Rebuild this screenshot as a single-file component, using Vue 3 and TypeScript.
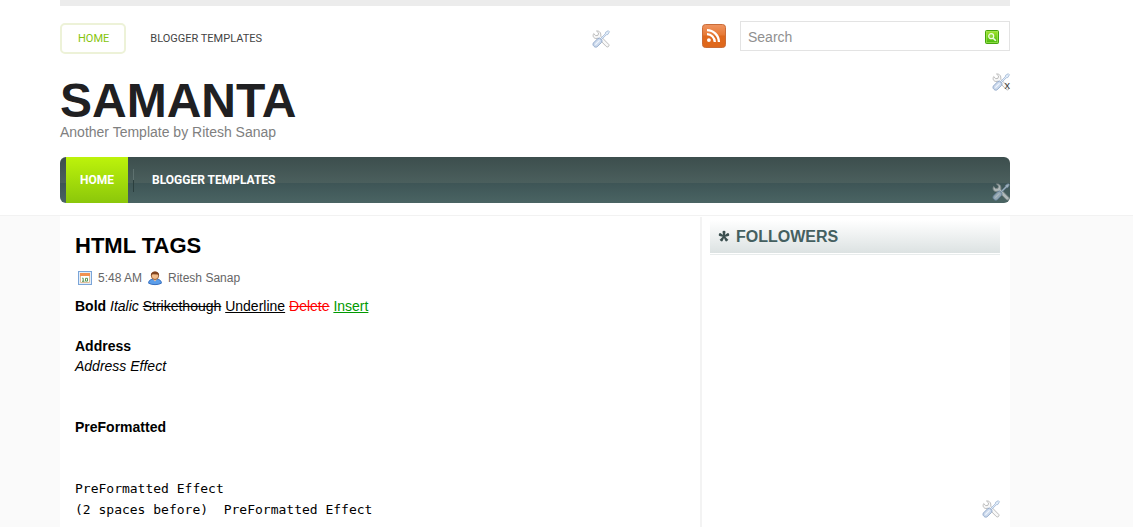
<script setup lang="ts">
import { defineComponent, h, ref } from 'vue'

const query = ref('')
const menu = ['Home', 'Blogger Templates']
const petals = [0, 65, -65, 145, -145]

const ToolsIcon = defineComponent({
  setup: () => () =>
    h('svg', { viewBox: '0 0 18 18', width: 18, height: 18, 'aria-hidden': 'true' }, [
      h('path', {
        d: 'M4.5 1 6.6 3 6 5.3 3.8 5.7 1.7 3.6C.3 6 1.6 8.4 4 8.5L6.1 8.2 14.3 16.5C15.5 17.8 17.8 16.2 16.8 14.5L8.7 6.2C9.4 3.2 7.5.5 4.5 1Z',
        fill: '#f7f7f7', stroke: '#a9a9a9', 'stroke-width': 0.9,
      }),
      h('path', {
        d: 'M8.4 8.7 13.3 3.8 13.6 2.3 16.3.7 17.4 1.8 15.8 4.5 14.3 4.8 9.4 9.7Z',
        fill: '#e0edfb', stroke: '#8ba6ca', 'stroke-width': 0.8,
      }),
      h('path', {
        d: 'M7.5 8 10.2 10.6 9.6 12.3 5.2 16.7C3.3 18.3-.2 15.4 1.4 13L5.9 8.5Z',
        fill: '#c4d4ea', stroke: '#7894bd', 'stroke-width': 0.9,
      }),
      h('path', { d: 'M3.3 14.6 7.6 10.3', stroke: '#eef4fd', 'stroke-width': 1.2, fill: 'none' }),
    ]),
})
</script>

<template>
  <div class="page">
    <header class="wrap header">
      <div class="top">
        <nav class="top-nav" aria-label="Pages">
          <a v-for="(item, i) in menu" :key="item" href="#" :class="{ current: i === 0 }">{{ item }}</a>
          <a href="#" class="tools nav-edit" aria-label="Edit page list"><ToolsIcon /></a>
        </nav>
        <a href="#" class="rss" aria-label="Subscribe">
          <svg viewBox="0 0 24 24" width="24" height="24" aria-hidden="true">
            <defs>
              <linearGradient id="rssFill" x1="0" y1="0" x2="0" y2="1">
                <stop offset="0" stop-color="#ef9461" />
                <stop offset=".45" stop-color="#e77a35" />
                <stop offset=".5" stop-color="#df681d" />
                <stop offset="1" stop-color="#df671a" />
              </linearGradient>
            </defs>
            <rect x=".5" y=".5" width="23" height="23" rx="3" fill="url(#rssFill)" stroke="#c96c38" />
            <circle cx="6.9" cy="16.1" r="1.9" fill="#fff" />
            <path d="M5 10.2a7.8 7.8 0 0 1 7.8 7.8M5 6.1a11.9 11.9 0 0 1 11.9 11.9" fill="none" stroke="#fff" stroke-width="2.3" />
          </svg>
        </a>
        <form class="search" role="search" @submit.prevent>
          <input v-model="query" type="text" placeholder="Search" aria-label="Search" />
          <button type="submit" aria-label="Search">
            <svg viewBox="0 0 14 14" width="14" height="14" aria-hidden="true">
              <defs>
                <linearGradient id="searchFill" x1="0" y1="0" x2="0" y2="1">
                  <stop offset="0" stop-color="#a6e52c" />
                  <stop offset="1" stop-color="#43b90c" />
                </linearGradient>
              </defs>
              <rect x=".5" y=".5" width="13" height="13" rx="1" fill="url(#searchFill)" stroke="#46a50c" />
              <rect x="1.5" y="1.5" width="11" height="11" fill="none" stroke="#a5e558" stroke-opacity=".7" />
              <circle cx="6.2" cy="6.2" r="2.5" fill="#8fd63c" stroke="#f1fbe5" stroke-width="1.2" />
              <path d="m8.2 8.2 2.6 2.6" stroke="#f1fbe5" stroke-width="1.6" />
            </svg>
          </button>
        </form>
      </div>

      <div class="brand">
        <h1>SAMANTA</h1>
        <p>Another Template by Ritesh Sanap</p>
        <a href="#" class="tools brand-edit" aria-label="Edit header"><ToolsIcon /><span>x</span></a>
      </div>

      <nav class="main-nav" aria-label="Main">
        <a v-for="(item, i) in menu" :key="item" href="#" :class="{ current: i === 0 }">{{ item }}</a>
        <a href="#" class="tools menu-edit" aria-label="Edit menu"><ToolsIcon /></a>
      </nav>
    </header>

    <div class="body">
      <div class="wrap columns">
        <main class="post">
          <h2>HTML TAGS</h2>
          <div class="meta">
            <svg viewBox="0 0 14 14" width="14" height="14" aria-hidden="true">
              <rect x=".5" y=".5" width="13" height="13" fill="#e3edf9" stroke="#7ba5d8" />
              <rect x="2" y="2" width="10" height="10" fill="#fff" />
              <rect x="2" y="2" width="10" height="3" fill="#f29150" />
              <path d="M2.5 5v6.5h9V5" fill="none" stroke="#dfbd99" />
              <path d="M4.2 7.2h1v3M4 10.3h2.4M7.5 7.3h2v2.8h-2z" fill="none" stroke="#589454" />
            </svg>
            <span>5:48 AM</span>
            <svg viewBox="0 0 14 14" width="14" height="14" aria-hidden="true">
              <path d="M.6 12.2C.6 9.3 2.8 8 7 8s6.4 1.3 6.4 4.2c-2.8 1.9-10 1.9-12.8 0Z" fill="#5b9eea" stroke="#2c65b8" stroke-width=".9" />
              <path d="M5 8.2 7 10.5l2-2.3" fill="#f3c299" />
              <circle cx="7" cy="4.8" r="3.7" fill="#f2bd8c" stroke="#8c4e26" stroke-width=".8" />
              <path d="M3 5C2.5 1.9 4.4.4 7 .4S11.5 1.9 11 5L9.8 3.4 4.4 3.2Z" fill="#81431e" />
            </svg>
            <span>Ritesh Sanap</span>
          </div>
          <p>
            <b>Bold</b> <i>Italic</i> <s>Strikethough</s> <u>Underline</u> <del>Delete</del> <ins>Insert</ins>
          </p>
          <h3>Address</h3>
          <address>Address Effect</address>
          <h3 class="pre-title">PreFormatted</h3>
          <pre>PreFormatted Effect
(2 spaces before)  PreFormatted Effect</pre>
        </main>
        <aside class="sidebar">
          <h2>
            <svg viewBox="0 0 12 12" width="12" height="12" aria-hidden="true">
              <path
                v-for="angle in petals"
                :key="angle"
                d="M5.3 5.4 4.5 1Q4.5-.2 6-.2T7.5 1L6.7 5.4Z"
                :transform="`rotate(${angle} 6 5.4)`"
                fill="#3c5050"
              />
            </svg>
            FOLLOWERS
          </h2>
          <a href="#" class="tools side-edit" aria-label="Edit followers"><ToolsIcon /></a>
        </aside>
      </div>
    </div>
  </div>
</template>

<style>
body {
  margin: 0;
  background: #fff;
}
</style>

<style scoped>
.page {
  display: flex;
  flex-direction: column;
  min-height: 100vh;
  font: 14px/20px "Liberation Sans", Arial, sans-serif;
  color: #000;
}
.page * {
  box-sizing: border-box;
}
h1, h2, h3, p, pre {
  margin: 0;
}
a {
  text-decoration: none;
}
svg {
  display: block;
  flex: none;
  overflow: visible;
}
.wrap {
  width: calc(100% - 60px);
  max-width: 950px;
  margin-left: 60px;
}
.tools {
  opacity: 0.85;
}
.header {
  border-top: 6px solid #ececec;
  padding-bottom: 12px;
}
.top {
  display: flex;
  align-items: flex-start;
  padding-top: 15px;
}
.top-nav {
  position: relative;
  display: flex;
  flex: 0 1 550px;
  gap: 8px;
  padding-top: 2px;
}
.top-nav > a:not(.tools) {
  padding: 0 14px;
  border: 2px solid transparent;
  border-radius: 5px;
  font: 11px/27px Roboto, sans-serif;
  text-transform: uppercase;
  color: #444;
}
.top-nav > a.current:not(.tools) {
  padding: 0 15px 0 16px;
  border-color: #edf2d8;
  color: #86c40d;
}
.nav-edit {
  position: absolute;
  right: 0;
  top: 9px;
}
.rss {
  margin: 3px 14px 0 auto;
}
.search {
  display: flex;
  align-items: center;
  width: 270px;
  height: 30px;
  padding: 2px 10px 0 7px;
  border: 1px solid #e3e3e3;
}
.search input {
  flex: 1;
  min-width: 0;
  padding: 0;
  border: 0;
  outline: 0;
  background: none;
  font: 14px/20px "Liberation Sans", Arial, sans-serif;
  color: #555;
}
.search input::placeholder {
  color: #909090;
  opacity: 1;
}
.search button {
  padding: 0;
  border: 0;
  background: none;
}
.brand {
  position: relative;
  padding: 26px 0 15px;
}
.brand h1 {
  font-size: 48px;
  line-height: 42px;
  color: #202022;
}
.brand p {
  color: #808080;
}
.brand-edit {
  position: absolute;
  right: 0;
  top: 19px;
}
.brand-edit span {
  position: absolute;
  right: 0;
  bottom: 0;
  font-size: 11px;
  line-height: 11px;
  color: #222;
}
.main-nav {
  position: relative;
  display: flex;
  align-items: center;
  gap: 6px;
  height: 46px;
  padding-left: 6px;
  border-radius: 6px;
  background: linear-gradient(#3c4e4d, #4b5f5d 56%, #3e5556 57%, #4a6463);
}
.main-nav > a:not(.tools) {
  padding: 0 18px;
  font: bold 12px/46px Roboto, sans-serif;
  text-transform: uppercase;
  color: #fff;
}
.main-nav > a.current:not(.tools) {
  padding: 0 14px;
  background: linear-gradient(#bdf30b, #8bc70a);
}
.main-nav > a.current::after {
  content: "";
  position: absolute;
  left: 73px;
  top: 12px;
  width: 1px;
  height: 23px;
  background: linear-gradient(#5e716f 48%, #2b3f3e 49%);
}
.menu-edit {
  position: absolute;
  right: 0;
  bottom: 2px;
  opacity: 0.6;
}
.body {
  display: flex;
  flex: 1;
  border-top: 1px solid #f2f2f2;
  background: #fafafa;
}
.columns {
  display: flex;
  border-top: 1px solid #fff;
  background: #fff;
}
.post {
  flex: 1;
  min-width: 0;
  padding: 14px 15px 0;
}
.post h2 {
  font-size: 22px;
  line-height: 30px;
}
.meta {
  display: flex;
  align-items: center;
  gap: 6px;
  height: 20px;
  margin: 7px 0 8px 3px;
  font-size: 12px;
  color: #666;
}
.post h3 {
  margin-top: 20px;
  font-size: 14px;
  line-height: 20px;
}
.post .pre-title {
  margin-top: 41px;
}
del {
  color: #f00;
}
ins {
  color: #090;
}
pre {
  margin-top: 41px;
  font: 13px/21px "DejaVu Sans Mono", monospace;
}
.sidebar {
  position: relative;
  flex: 0 0 310px;
  padding: 3px 10px 0 8px;
  border-left: 2px solid #f3f3f3;
}
.sidebar h2 {
  display: flex;
  align-items: center;
  gap: 6px;
  height: 33px;
  padding-left: 8px;
  background: linear-gradient(#fff, #dce2e2);
  box-shadow: 0 1px #fff, 0 2px #e8ecec;
  font-size: 16px;
  color: #456060;
}
.side-edit {
  position: absolute;
  right: 10px;
  top: 283px;
}
</style>
